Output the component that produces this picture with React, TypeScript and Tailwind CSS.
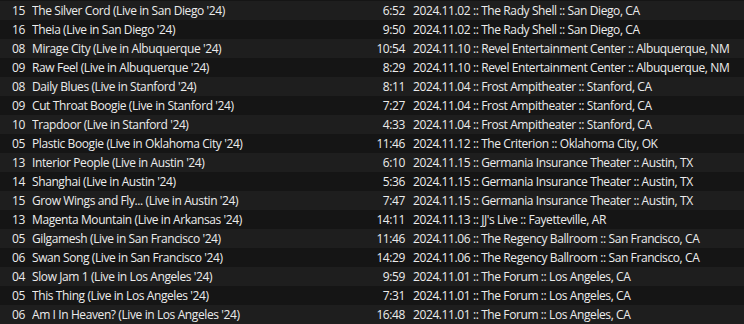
import React from 'react';

interface Track {
    num: string;
    title: string;
    length: string;
    show: string;
}

const tracks: Track[] = [
    { num: '15', title: "The Silver Cord (Live in San Diego '24)", length: '6:52', show: '2024.11.02 :: The Rady Shell :: San Diego, CA' },
    { num: '16', title: "Theia (Live in San Diego '24)", length: '9:50', show: '2024.11.02 :: The Rady Shell :: San Diego, CA' },
    { num: '08', title: "Mirage City (Live in Albuquerque '24)", length: '10:54', show: '2024.11.10 :: Revel Entertainment Center :: Albuquerque, NM' },
    { num: '09', title: "Raw Feel (Live in Albuquerque '24)", length: '8:29', show: '2024.11.10 :: Revel Entertainment Center :: Albuquerque, NM' },
    { num: '08', title: "Daily Blues (Live in Stanford '24)", length: '8:11', show: '2024.11.04 :: Frost Ampitheater :: Stanford, CA' },
    { num: '09', title: "Cut Throat Boogie (Live in Stanford '24)", length: '7:27', show: '2024.11.04 :: Frost Ampitheater :: Stanford, CA' },
    { num: '10', title: "Trapdoor (Live in Stanford '24)", length: '4:33', show: '2024.11.04 :: Frost Ampitheater :: Stanford, CA' },
    { num: '05', title: "Plastic Boogie (Live in Oklahoma City '24)", length: '11:46', show: '2024.11.12 :: The Criterion :: Oklahoma City, OK' },
    { num: '13', title: "Interior People (Live in Austin '24)", length: '6:10', show: '2024.11.15 :: Germania Insurance Theater :: Austin, TX' },
    { num: '14', title: "Shanghai (Live in Austin '24)", length: '5:36', show: '2024.11.15 :: Germania Insurance Theater :: Austin, TX' },
    { num: '15', title: "Grow Wings and Fly... (Live in Austin '24)", length: '7:47', show: '2024.11.15 :: Germania Insurance Theater :: Austin, TX' },
    { num: '13', title: "Magenta Mountain (Live in Arkansas '24)", length: '14:11', show: "2024.11.13 :: JJ's Live :: Fayetteville, AR" },
    { num: '05', title: "Gilgamesh (Live in San Francisco '24)", length: '11:46', show: '2024.11.06 :: The Regency Ballroom :: San Francisco, CA' },
    { num: '06', title: "Swan Song (Live in San Francisco '24)", length: '14:29', show: '2024.11.06 :: The Regency Ballroom :: San Francisco, CA' },
    { num: '04', title: "Slow Jam 1 (Live in Los Angeles '24)", length: '9:59', show: '2024.11.01 :: The Forum :: Los Angeles, CA' },
    { num: '05', title: "This Thing (Live in Los Angeles '24)", length: '7:31', show: '2024.11.01 :: The Forum :: Los Angeles, CA' },
    { num: '06', title: "Am I In Heaven? (Live in Los Angeles '24)", length: '16:48', show: '2024.11.01 :: The Forum :: Los Angeles, CA' },
];

export default function App() {
    return (
        <div
            className="w-[744px] h-[324px] overflow-hidden bg-[#151515] text-[#ececec] text-[12px] tracking-[-0.4px] pt-[1px]"
            style={{ fontFamily: '"Open Sans", "Noto Sans", sans-serif' }}
        >
            {tracks.map((t, i) => (
                <div
                    key={i}
                    className={`flex items-center h-[19px] pt-[1px] whitespace-nowrap ${i % 2 === 0 ? 'bg-[#1e1e1e]' : 'bg-[#151515]'}`}
                >
                    <span className="w-[32px] pl-[12px] shrink-0">{t.num}</span>
                    <span className="flex-1 overflow-hidden">{t.title}</span>
                    <span className="w-[60px] text-right shrink-0">{t.length}</span>
                    <span className="w-[339px] pl-[8px] shrink-0 overflow-hidden">{t.show}</span>
                </div>
            ))}
        </div>
    );
}
